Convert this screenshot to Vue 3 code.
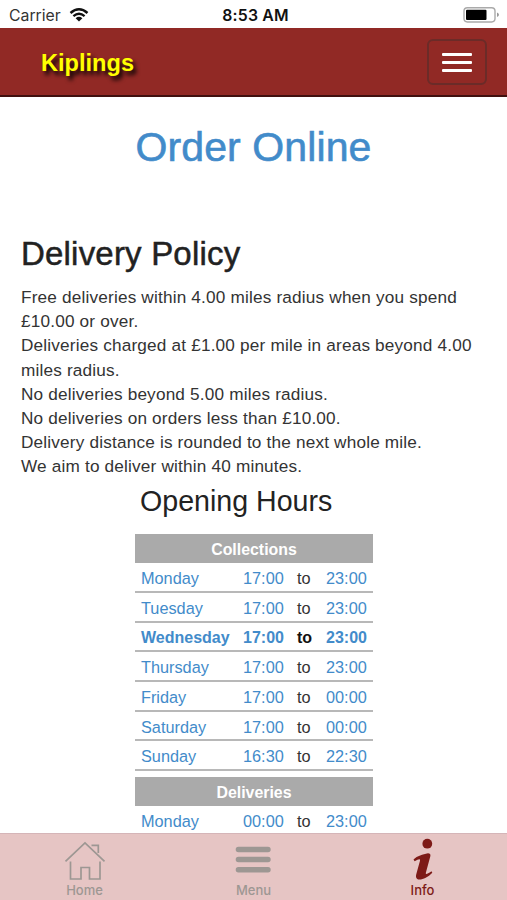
<template>
  <div class="app">
    <div class="status-bar">
      <div class="carrier">
        <span>Carrier</span>
        <svg width="20" height="14" viewBox="0 0 20 14">
          <path d="M1.5 5 Q10 -2.4 18.5 5" fill="none" stroke="#111" stroke-width="2.5" />
          <path d="M4.4 8.2 Q10 3.4 15.6 8.2" fill="none" stroke="#111" stroke-width="2.3" />
          <path d="M6.6 10.2 Q10 7.4 13.4 10.2 L10 13.6 Z" fill="#111" />
        </svg>
      </div>
      <span class="clock">8:53 AM</span>
      <svg class="battery" width="37" height="17" viewBox="0 0 37 17">
        <rect x="1" y="0.7" width="31" height="14.3" rx="3.4" fill="#fff" stroke="#aaa" stroke-width="1.4" />
        <rect x="3" y="2.7" width="20.5" height="10.2" rx="1" fill="#000" />
        <path d="M34 5.5 Q36 6.5 36 7.8 Q36 9.1 34 10.1 Z" fill="#999" />
      </svg>
    </div>

    <header class="navbar">
      <a class="brand">Kiplings</a>
      <button class="toggle" @click="menuOpen = !menuOpen">
        <span></span>
        <span></span>
        <span></span>
      </button>
    </header>

    <main>
      <h1><a>Order Online</a></h1>

      <section class="policy">
        <h2>Delivery Policy</h2>
        <p v-for="line in policy" :key="line">{{ line }}</p>
      </section>

      <section class="hours">
        <h3>Opening Hours</h3>
        <div v-for="group in hours" :key="group.title" class="group">
          <div class="group-title">{{ group.title }}</div>
          <div
            v-for="row in group.rows"
            :key="row.day"
            class="row"
            :class="{ today: row.today }"
          >
            <span>{{ row.day }}</span>
            <span>{{ row.open }}</span>
            <span class="to">to</span>
            <span>{{ row.close }}</span>
          </div>
        </div>
      </section>
    </main>

    <nav class="tabs">
      <a class="tab" :class="{ active: tab === 'home' }" @click="tab = 'home'">
        <svg width="42" height="42" viewBox="0 0 42 42" fill="none" stroke="currentColor" stroke-width="1.7">
          <path d="M1.5 20.3 L21 2 L40.5 20.3" />
          <path d="M27.5 4.3 H34.3 V12" />
          <path d="M6.5 20.5 V38 H17 V26.5 H25.5 V38 H36 V20.5" />
        </svg>
        <span>Home</span>
      </a>
      <a class="tab" :class="{ active: tab === 'menu' }" @click="tab = 'menu'">
        <svg width="42" height="42" viewBox="0 0 42 42" stroke="currentColor" stroke-width="5.4" stroke-linecap="round">
          <path d="M5.4 8.5 H35 M5.4 18.5 H35 M5.4 28.7 H35" />
        </svg>
        <span>Menu</span>
      </a>
      <a class="tab" :class="{ active: tab === 'info' }" @click="tab = 'info'">
        <svg width="42" height="42" viewBox="0 0 42 42" fill="currentColor">
          <circle cx="25.3" cy="2.7" r="4.9" />
          <path d="M11.5 18.5 C15.5 14.5 20.5 13.5 26 12.2 Q28.8 12.2 28.4 15 L23.8 32 C23.6 33.8 25 33.4 29.5 30.3 L30.3 31.8 C26 36.3 20.8 38.8 17.1 38.6 C14.2 38.3 13.6 36 14.2 33.5 L18 19.8 C18.4 17.3 16.5 18 12.6 20.3 Z" />
        </svg>
        <span>Info</span>
      </a>
    </nav>
  </div>
</template>

<script setup>
import { ref } from "vue";

const menuOpen = ref(false);
const tab = ref("info");

const policy = [
  "Free deliveries within 4.00 miles radius when you spend £10.00 or over.",
  "Deliveries charged at £1.00 per mile in areas beyond 4.00 miles radius.",
  "No deliveries beyond 5.00 miles radius.",
  "No deliveries on orders less than £10.00.",
  "Delivery distance is rounded to the next whole mile.",
  "We aim to deliver within 40 minutes.",
];

const hours = [
  {
    title: "Collections",
    rows: [
      { day: "Monday", open: "17:00", close: "23:00" },
      { day: "Tuesday", open: "17:00", close: "23:00" },
      { day: "Wednesday", open: "17:00", close: "23:00", today: true },
      { day: "Thursday", open: "17:00", close: "23:00" },
      { day: "Friday", open: "17:00", close: "00:00" },
      { day: "Saturday", open: "17:00", close: "00:00" },
      { day: "Sunday", open: "16:30", close: "22:30" },
    ],
  },
  {
    title: "Deliveries",
    rows: [{ day: "Monday", open: "00:00", close: "23:00" }],
  },
];
</script>

<style>
body {
  margin: 0;
}
</style>

<style scoped>
.app {
  display: flex;
  flex-direction: column;
  height: 900px;
  overflow: hidden;
  background: #fff;
  color: #333;
  font-family: "Liberation Sans", Arial, sans-serif;
}

.status-bar {
  display: grid;
  grid-template-columns: 1fr auto 1fr;
  align-items: center;
  flex: none;
  height: 28px;
  padding: 2px 7px 0 9px;
  box-sizing: border-box;
  font-family: Inter, sans-serif;
  font-size: 15.8px;
}

.carrier {
  display: flex;
  align-items: center;
  gap: 8px;
}

.clock {
  padding-left: 2px;
  color: #111;
  font-weight: 600;
  letter-spacing: 0.2px;
}

.battery {
  justify-self: end;
}

.navbar {
  display: flex;
  justify-content: space-between;
  align-items: center;
  flex: none;
  height: 69px;
  padding: 1px 20px 0 41px;
  box-sizing: border-box;
  background: #912925;
  border-bottom: 2px solid #40100f;
}

.brand {
  padding-top: 2px;
  color: #ff0;
  font-size: 23.6px;
  font-weight: bold;
  text-shadow: 3px 4px 4px #000;
}

.toggle {
  display: flex;
  flex-direction: column;
  justify-content: center;
  align-items: center;
  gap: 5px;
  width: 60px;
  height: 46px;
  padding: 0;
  background: none;
  border: 2px solid #6b2b28;
  border-radius: 6px;
}

.toggle span {
  width: 30px;
  height: 3px;
  background: #fff;
  border-radius: 1px;
}

main {
  flex: 1;
  min-height: 0;
  overflow: hidden;
}

h1,
h2,
h3,
p {
  margin: 0;
}

h1 {
  margin-top: 26px;
  color: #428bca;
  font-size: 41px;
  font-weight: normal;
  letter-spacing: 0.1px;
  line-height: 48px;
  text-align: center;
  -webkit-text-stroke: 0.6px;
}

.policy {
  margin-top: 63px;
  padding: 0 21px;
}

h2 {
  margin-bottom: 11px;
  color: #222;
  font-size: 33px;
  font-weight: normal;
  letter-spacing: 0.2px;
  line-height: 40px;
  -webkit-text-stroke: 0.5px;
}

p {
  font-size: 17.2px;
  letter-spacing: 0.18px;
  line-height: 24.2px;
}

.hours {
  width: 238px;
  margin-left: 135px;
}

h3 {
  margin: 3px 0 14.6px 5px;
  color: #222;
  font-size: 28.6px;
  font-weight: normal;
  line-height: 38px;
}

.group + .group {
  margin-top: 6px;
}

.group-title {
  height: 29px;
  background: #aaa;
  color: #fff;
  font-size: 15.9px;
  font-weight: bold;
  line-height: 31px;
  text-align: center;
}

.row {
  display: grid;
  grid-template-columns: 102px 54px 29px 1fr;
  height: 29.7px;
  padding-left: 6px;
  box-sizing: border-box;
  border-bottom: 2px solid #b8b8b8;
  color: #428bca;
  font-size: 16.3px;
  line-height: 30px;
}

.to {
  color: #333;
}

.today {
  font-size: 16px;
  font-weight: bold;
}

.today .to {
  color: #111;
}

.tabs {
  display: grid;
  grid-template-columns: repeat(3, 1fr);
  flex: none;
  height: 67px;
  box-sizing: border-box;
  background: #e6c5c4;
  border-top: 1px solid #d5b5b8;
}

.tab {
  display: flex;
  flex-direction: column;
  align-items: center;
  padding-top: 7px;
  color: #9d9793;
  font-family: Inter, sans-serif;
  font-size: 13px;
  font-weight: 500;
  line-height: 15px;
}

.tab svg {
  overflow: visible;
}

.active {
  color: #7d1a17;
}
</style>
